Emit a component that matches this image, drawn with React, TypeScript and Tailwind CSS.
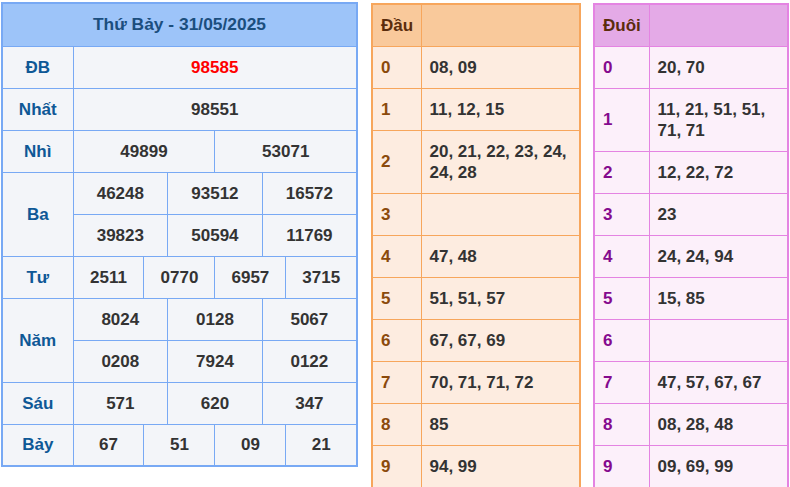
import React from 'react';

const font = { fontFamily: '"Liberation Sans", Arial, sans-serif' };

const dau: [string, string][] = [
  ['0', '08, 09'],
  ['1', '11, 12, 15'],
  ['2', '20, 21, 22, 23, 24, 24, 28'],
  ['3', ''],
  ['4', '47, 48'],
  ['5', '51, 51, 57'],
  ['6', '67, 67, 69'],
  ['7', '70, 71, 71, 72'],
  ['8', '85'],
  ['9', '94, 99'],
];

const duoi: [string, string][] = [
  ['0', '20, 70'],
  ['1', '11, 21, 51, 51, 71, 71'],
  ['2', '12, 22, 72'],
  ['3', '23'],
  ['4', '24, 24, 94'],
  ['5', '15, 85'],
  ['6', ''],
  ['7', '47, 57, 67, 67'],
  ['8', '08, 28, 48'],
  ['9', '09, 69, 99'],
];

const lbl = 'border border-[#78a9f4] text-[#0e5896] font-bold text-center px-1';
const val = 'border border-[#78a9f4] text-[#333] font-bold text-center';

const ResultTable = () => (
  <table className="border-collapse border-2 border-[#78a9f4] bg-[#f3f5f9] w-[357px] table-fixed text-[17px] leading-[21px]">
    <colgroup>
      <col className="w-[71px]" />
      {Array.from({ length: 12 }).map((_, i) => (
        <col key={i} />
      ))}
    </colgroup>
    <tbody>
      <tr className="h-[43px]">
        <th colSpan={13} className="bg-[#9dc4f9] text-[#1b4e7e] font-bold text-center text-[17.4px] border border-[#78a9f4]">
          Thứ Bảy - 31/05/2025
        </th>
      </tr>
      <tr className="h-[42px]">
        <td className={lbl}>ĐB</td>
        <td colSpan={12} className={val + ' !text-[#ff0000]'}>98585</td>
      </tr>
      <tr className="h-[42px]">
        <td className={lbl}>Nhất</td>
        <td colSpan={12} className={val}>98551</td>
      </tr>
      <tr className="h-[42px]">
        <td className={lbl}>Nhì</td>
        <td colSpan={6} className={val}>49899</td>
        <td colSpan={6} className={val}>53071</td>
      </tr>
      <tr className="h-[42px]">
        <td rowSpan={2} className={lbl}>Ba</td>
        <td colSpan={4} className={val}>46248</td>
        <td colSpan={4} className={val}>93512</td>
        <td colSpan={4} className={val}>16572</td>
      </tr>
      <tr className="h-[42px]">
        <td colSpan={4} className={val}>39823</td>
        <td colSpan={4} className={val}>50594</td>
        <td colSpan={4} className={val}>11769</td>
      </tr>
      <tr className="h-[42px]">
        <td className={lbl}>Tư</td>
        <td colSpan={3} className={val}>2511</td>
        <td colSpan={3} className={val}>0770</td>
        <td colSpan={3} className={val}>6957</td>
        <td colSpan={3} className={val}>3715</td>
      </tr>
      <tr className="h-[42px]">
        <td rowSpan={2} className={lbl}>Năm</td>
        <td colSpan={4} className={val}>8024</td>
        <td colSpan={4} className={val}>0128</td>
        <td colSpan={4} className={val}>5067</td>
      </tr>
      <tr className="h-[42px]">
        <td colSpan={4} className={val}>0208</td>
        <td colSpan={4} className={val}>7924</td>
        <td colSpan={4} className={val}>0122</td>
      </tr>
      <tr className="h-[42px]">
        <td className={lbl}>Sáu</td>
        <td colSpan={4} className={val}>571</td>
        <td colSpan={4} className={val}>620</td>
        <td colSpan={4} className={val}>347</td>
      </tr>
      <tr className="h-[42px]">
        <td className={lbl}>Bảy</td>
        <td colSpan={3} className={val}>67</td>
        <td colSpan={3} className={val}>51</td>
        <td colSpan={3} className={val}>09</td>
        <td colSpan={3} className={val}>21</td>
      </tr>
    </tbody>
  </table>
);

type LotoProps = {
  title: string;
  rows: [string, string][];
  width: string;
  keyWidth: string;
  border: string;
  head: string;
  body: string;
  keyColor: string;
};

const LotoTable = ({ title, rows, width, keyWidth, border, head, body, keyColor }: LotoProps) => (
  <table className={`border-collapse border-2 table-fixed text-[17px] leading-[21px] ${width} ${border} ${body}`}>
    <colgroup>
      <col className={keyWidth} />
      <col />
    </colgroup>
    <tbody>
      <tr className={`h-[42px] ${head}`}>
        <th className={`border ${border} text-left px-2 font-bold text-[#5b2c0c]`}>{title}</th>
        <th className={`border ${border}`}></th>
      </tr>
      {rows.map(([k, v]) => (
        <tr key={k}>
          <td className={`border ${border} px-2 py-[10px] font-bold ${keyColor}`}>{k}</td>
          <td className={`border ${border} px-2 py-[10px] font-bold text-[#333] h-[42px]`}>{v}</td>
        </tr>
      ))}
    </tbody>
  </table>
);

export default function App() {
  return (
    <div className="flex items-start pl-[1px] pt-[2px] bg-white w-[790px] h-[487px] overflow-hidden" style={font}>
      <ResultTable />
      <div className="pt-[1px] ml-[13px]">
        <LotoTable
          title="Đầu"
          rows={dau}
          width="w-[210px]"
          keyWidth="w-[49px]"
          border="border-[#f7a65c]"
          head="bg-[#f9c99b]"
          body="bg-[#fdece0]"
          keyColor="text-[#8b4a0c]"
        />
      </div>
      <div className="pt-[1px] ml-[12px]">
        <LotoTable
          title="Đuôi"
          rows={duoi}
          width="w-[196px]"
          keyWidth="w-[55px]"
          border="border-[#e484e2]"
          head="bg-[#e4aae7]"
          body="bg-[#fcf0fa]"
          keyColor="text-[#850a8e]"
        />
      </div>
    </div>
  );
}
